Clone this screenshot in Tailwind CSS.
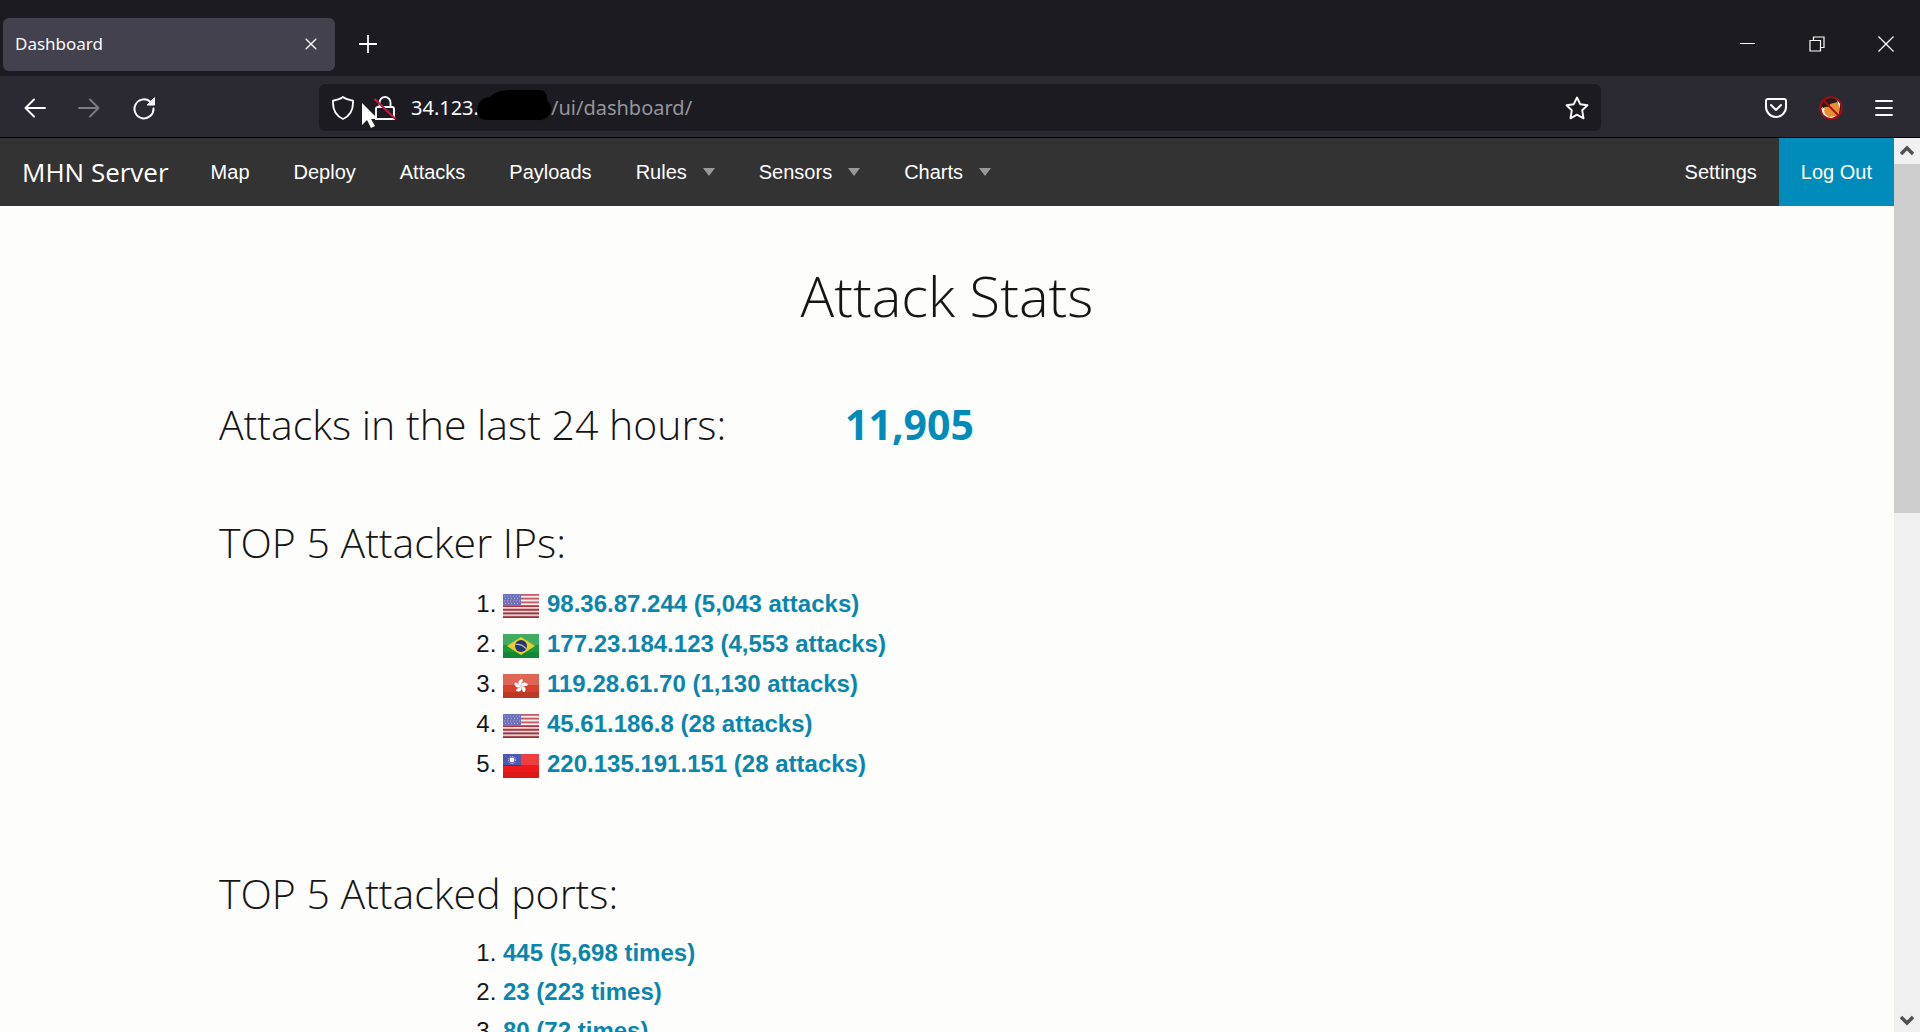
<!DOCTYPE html>
<html lang="en">
<head>
<meta charset="utf-8">
<title>Dashboard</title>
<script src="https://cdn.jsdelivr.net/npm/@tailwindcss/browser@4"></script>
</head>
<body class="flex h-screen flex-col overflow-hidden bg-[#fdfdfc] font-['Liberation_Sans',Arial,sans-serif] text-[#151515]">
<svg class="hidden" aria-hidden="true">
  <defs>
    <linearGradient id="shine" x1="0" y1="0" x2="0" y2="1"><stop offset="0" stop-color="#fff" stop-opacity=".28"/><stop offset=".5" stop-color="#fff" stop-opacity=".08"/><stop offset="1" stop-color="#000" stop-opacity=".18"/></linearGradient>
    <symbol id="us" viewBox="0 0 36 24">
      <path fill="#f0e4e4" d="M0 0h36v24H0z"/>
      <path stroke="#b5303c" stroke-width="1.85" d="M0 .9h36M0 4.6h36M0 8.3h36M0 12h36M0 15.7h36M0 19.4h36M0 23.1h36"/>
      <path fill="#4a4fa8" d="M0 0h18v12H0z"/>
      <path stroke="#9a9cdc" stroke-width="1" stroke-dasharray="1 2" d="M1 2h16M2 4.500h15M1 7h16M2 9.500h15"/>
      <path fill="#fff" fill-opacity=".2" d="M0 0h36v12H0z"/>
      <path fill="#000" fill-opacity=".1" d="M0 18h36v6H0z"/>
    </symbol>
    <symbol id="br" viewBox="0 0 36 24">
      <path fill="#159a3c" d="M0 0h36v24H0z"/><path fill="#fff" fill-opacity=".18" d="M0 0h36v11H0z"/><path fill="#000" fill-opacity=".12" d="M0 18h36v6H0z"/><path fill="#e8cf2c" d="M18 3l14 9-14 9L4 12z"/><circle cx="18" cy="12" r="6" fill="#25356f"/><path d="M12.500 10.500q6-1 10.500 4" fill="none" stroke="#b9bcd8" stroke-width="1.200"/>
    </symbol>
    <symbol id="hk" viewBox="0 0 36 24">
      <path fill="#d8402b" d="M0 0h36v24H0z"/><path fill="#fff" fill-opacity=".2" d="M0 0h36v11H0z"/><path fill="#000" fill-opacity=".12" d="M0 18h36v6H0z"/>
      <g fill="#fff" transform="translate(18 12)"><path id="petal" d="M0 0C-4-2-3-6 1-7 3-5 0-3 0 0z"/><use href="#petal" transform="rotate(72)"/><use href="#petal" transform="rotate(144)"/><use href="#petal" transform="rotate(216)"/><use href="#petal" transform="rotate(288)"/></g>
    </symbol>
    <symbol id="tw" viewBox="0 0 36 24">
      <path fill="#ee1a1a" d="M0 0h36v24H0z"/><path fill="#3038a0" d="M0 0h18v12H0z"/><path fill="#fff" fill-opacity=".16" d="M0 0h36v11H0z"/><path fill="#000" fill-opacity=".08" d="M0 18h36v6H0z"/><circle cx="9" cy="6" r="2.400" fill="#fff"/><circle cx="9" cy="6" r="3.500" fill="none" stroke="#d8d8ff" stroke-width="1" stroke-dasharray="1 1"/>
    </symbol>
  </defs>
</svg>

<header class="shrink-0 border-b border-black bg-[#2b2a33] font-['Open_Sans','Noto_Sans',sans-serif] text-[#fbfbfe]">
  <div class="flex h-19 items-center bg-[#1c1b22] pt-3">
    <div class="ml-[3px] flex h-[53px] w-[332px] items-center justify-between rounded-md bg-[#42414d] pr-4 pl-3">
      <span class="font-['Noto_Sans',sans-serif] text-[17px]">Dashboard</span>
      <button type="button" aria-label="Close tab" class="flex size-4 items-center justify-center"><svg class="size-3" viewBox="0 0 12 12" fill="none" stroke="currentColor" stroke-width="1.400"><path d="M.7.7l10.600 10.600M11.300.7L.7 11.300"/></svg></button>
    </div>
    <button type="button" aria-label="New tab" class="ml-6"><svg class="size-[18px]" viewBox="0 0 18 18" stroke="currentColor" stroke-width="1.800"><path d="M9 0v18M0 9h18"/></svg></button>
    <div class="ml-auto flex items-center gap-[53px] pr-[26px]">
      <button type="button" aria-label="Minimize"><svg class="size-4" viewBox="0 0 16 16"><path d="M0 7.500h15" stroke="currentColor"/></svg></button>
      <button type="button" aria-label="Restore"><svg class="size-4" viewBox="0 0 16 16" fill="none" stroke="currentColor" stroke-width="1.200"><path d="M1 4.500h10.500V15H1zM4.500 4.500V1H15v10.500h-3.500"/></svg></button>
      <button type="button" aria-label="Close"><svg class="size-4" viewBox="0 0 16 16" stroke="currentColor" stroke-width="1.300"><path d="M.5.5l15 15M15.500.5l-15 15"/></svg></button>
    </div>
  </div>
  <div class="flex h-[61px] items-center pt-0.5">
    <div class="flex w-[319px] shrink-0 items-center gap-8 pl-6">
      <button type="button" aria-label="Back"><svg class="size-[22px]" viewBox="0 0 22 22" fill="none" stroke="currentColor" stroke-width="1.900" stroke-linecap="round" stroke-linejoin="round"><path d="M21 11H1.500M10 2.500L1.500 11l8.500 8.500"/></svg></button>
      <button type="button" aria-label="Forward" class="text-[#7d7c83]"><svg class="size-[22px]" viewBox="0 0 22 22" fill="none" stroke="currentColor" stroke-width="1.900" stroke-linecap="round" stroke-linejoin="round"><path d="M1 11h19.500M12 2.500l8.500 8.500-8.500 8.500"/></svg></button>
      <button type="button" aria-label="Reload"><svg class="size-6" viewBox="0 0 24 24" fill="none" stroke="currentColor" stroke-width="2" stroke-linecap="round"><path d="M21.500 12.500A9.500 9.500 0 1 1 18 5.500"/><path d="M22.500 2v7h-7z" fill="currentColor" stroke-width="1" stroke-linejoin="round"/></svg></button>
    </div>
    <div class="relative flex h-[47px] flex-1 items-center rounded-md bg-[#1c1b22] px-3">
      <label for="url" aria-label="Address"><svg class="size-6" viewBox="0 0 24 24" fill="none" stroke="currentColor" stroke-width="1.900" stroke-linejoin="round"><path d="M12 1c3 2.300 6.500 3 10 3.700.5 8.300-2.500 15-10 18.300C4.500 19.700 1.500 13 2 4.700 5.500 4 9 3.300 12 1z"/></svg></label>
      <svg class="ml-[18px] size-6" viewBox="0 0 24 24" fill="none" stroke="currentColor" stroke-width="1.900"><path d="M6.500 11V6.500a5.500 5.500 0 0 1 11 0V11M5 11h14q2 0 2 2v10H3V13q0-2 2-2z"/><path d="M1.500 3l21 20" stroke="#d4123c" stroke-width="2.300"/></svg>
      <input id="url" type="text" value="34.123." class="ml-[14px] w-[140px] bg-transparent font-['Noto_Sans',sans-serif] text-xl outline-none">
      <span class="font-['Noto_Sans',sans-serif] text-xl text-[#96959b]">/ui/dashboard/</span>
      <svg class="absolute top-1 left-[157px] h-9 w-[76px]" viewBox="0 0 78 36" preserveAspectRatio="none"><path d="M2 18Q4 10 14 9 22 1 38 2H66q8 1 7 11 7 5 3 13-5 7-14 6H12Q-2 32 2 18z" fill="#000"/></svg>
      <svg class="absolute top-[19px] left-[42px] h-[26px] w-[18px]" viewBox="0 0 18 26"><path d="M1 0v22l5-5 4 8 4-2-4-7h7z" fill="#fff"/></svg>
      <button type="button" aria-label="Bookmark this page" class="ml-auto"><svg class="size-6" viewBox="0 0 24 24" fill="none" stroke="currentColor" stroke-width="1.900" stroke-linejoin="round"><path d="M12 1.500l3.200 6.700 7.300 1-5.300 5.100 1.300 8-6.500-3.700-6.500 3.700 1.300-8L1.500 9.200l7.300-1z"/></svg></button>
    </div>
    <div class="flex w-[319px] shrink-0 items-center justify-end gap-8 pr-[27px]">
      <button type="button" aria-label="Save to Pocket"><svg class="h-5 w-[22px]" viewBox="0 0 22 20" fill="none" stroke="currentColor" stroke-width="2" stroke-linecap="round" stroke-linejoin="round"><path d="M3 1h16q2 0 2 2v6a10 10 0 0 1-20 0V3q0-2 2-2zM6 7l5 5 5-5"/></svg></button>
      <button type="button" aria-label="Extension"><svg class="size-6" viewBox="0 0 24 24"><circle cx="12" cy="12" r="10.500" fill="#2a1a1c"/><path d="M3 14Q5 10 9 11q2-4 6-4l3-1 3 5-1 7-4 3-7 1z" fill="#e5912f"/><path d="M2 12l3 2 1 4 4 3 6-1-3 3H9l-5-4zM18 3l3 4v5l-2-4zM3 11l3 2-2 2z" fill="#fff4ea"/><circle cx="12" cy="12" r="10.800" fill="none" stroke="#a80c16" stroke-width="1.800"/><path d="M4.500 4.500l15 15" stroke="#a80c16" stroke-width="1.800"/></svg></button>
      <button type="button" aria-label="Menu"><svg class="h-4 w-[18px]" viewBox="0 0 18 16" stroke="currentColor" stroke-width="1.800" stroke-linecap="round"><path d="M1 1h16M1 8h16M1 15h16"/></svg></button>
    </div>
  </div>
</header>

<div class="flex min-h-0 flex-1">
  <div class="min-w-0 flex-1 overflow-hidden">
    <nav class="flex h-17 items-center bg-[#333] text-xl text-white">
      <a href="#" class="pr-5 pl-[22px] font-['Open_Sans',sans-serif] text-[26px]">MHN Server</a>
      <a href="#" class="px-[22px]">Map</a>
      <a href="#" class="px-[22px]">Deploy</a>
      <a href="#" class="px-[22px]">Attacks</a>
      <a href="#" class="px-[22px]">Payloads</a>
      <a href="#" class="flex items-center gap-4 px-[22px]">Rules<span class="border-x-6 border-t-8 border-x-transparent border-t-[#999]"></span></a>
      <a href="#" class="flex items-center gap-4 px-[22px]">Sensors<span class="border-x-6 border-t-8 border-x-transparent border-t-[#999]"></span></a>
      <a href="#" class="flex items-center gap-4 px-[22px]">Charts<span class="border-x-6 border-t-8 border-x-transparent border-t-[#999]"></span></a>
      <a href="#" class="ml-auto px-[22px]">Settings</a>
      <a href="#" class="flex h-full items-center bg-[#008cba] px-[22px]">Log Out</a>
    </nav>
    <main class="mx-auto max-w-[1500px] px-[22px]">
      <h1 class="pt-[50px] text-center font-['Open_Sans',sans-serif] text-[56px] leading-[78px] font-light">Attack Stats</h1>
      <div class="mt-[62px] flex font-['Open_Sans',sans-serif] text-[41px] leading-14">
        <h2 class="w-[626px] font-light">Attacks in the last 24 hours:</h2>
        <a href="#" class="font-bold text-[#008cba]">11,905</a>
      </div>
      <h2 class="mt-[62px] font-['Open_Sans',sans-serif] text-[41px] leading-14 font-light">TOP 5 Attacker IPs:</h2>
      <ol class="mt-3.5 ml-[284px] list-decimal text-2xl leading-10">
        <li><a href="#" class="font-bold text-[#0a85ae]"><svg class="mr-2 inline-block h-6 w-9 align-[-6px]"><use href="#us"/></svg>98.36.87.244 (5,043 attacks)</a></li>
        <li><a href="#" class="font-bold text-[#0a85ae]"><svg class="mr-2 inline-block h-6 w-9 align-[-6px]"><use href="#br"/></svg>177.23.184.123 (4,553 attacks)</a></li>
        <li><a href="#" class="font-bold text-[#0a85ae]"><svg class="mr-2 inline-block h-6 w-9 align-[-6px]"><use href="#hk"/></svg>119.28.61.70 (1,130 attacks)</a></li>
        <li><a href="#" class="font-bold text-[#0a85ae]"><svg class="mr-2 inline-block h-6 w-9 align-[-6px]"><use href="#us"/></svg>45.61.186.8 (28 attacks)</a></li>
        <li><a href="#" class="font-bold text-[#0a85ae]"><svg class="mr-2 inline-block h-6 w-9 align-[-6px]"><use href="#tw"/></svg>220.135.191.151 (28 attacks)</a></li>
      </ol>
      <h2 class="mt-[81px] font-['Open_Sans',sans-serif] text-[41px] leading-14 font-light">TOP 5 Attacked ports:</h2>
      <ol class="mt-3 ml-[284px] list-decimal text-2xl leading-[39px]">
        <li><a href="#" class="font-bold text-[#0a85ae]">445 (5,698 times)</a></li>
        <li><a href="#" class="font-bold text-[#0a85ae]">23 (223 times)</a></li>
        <li><a href="#" class="font-bold text-[#0a85ae]">80 (72 times)</a></li>
      </ol>
    </main>
  </div>
  <div class="flex w-[26px] shrink-0 flex-col items-center bg-[#f0f0f0]" aria-hidden="true">
    <svg class="h-[26px] w-3.5 shrink-0" viewBox="0 0 14 26" fill="none" stroke="#505050" stroke-width="3.500"><path d="M1 16l6-6 6 6"/></svg>
    <div class="h-[39%] w-full bg-[#cdcdcd]"></div>
    <svg class="mt-auto h-[26px] w-3.5 shrink-0" viewBox="0 0 14 26" fill="none" stroke="#505050" stroke-width="3.500"><path d="M1 11l6 6 6-6"/></svg>
  </div>
</div>
</body>
</html>
